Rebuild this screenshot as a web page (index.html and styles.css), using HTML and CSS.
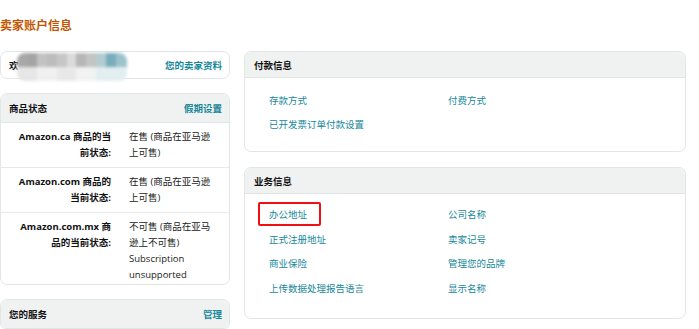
FILE: index.html
```html
<!DOCTYPE html>
<html lang="zh-CN">
<head>
<meta charset="UTF-8">
<meta name="viewport" content="width=device-width, initial-scale=1.0">
<title>卖家账户信息</title>
<link rel="stylesheet" href="styles.css">
</head>
<body>

<h1 class="page-title">卖家账户信息</h1>

<div class="layout">
  <div class="column">
    <div class="card welcome">
      <span class="welcome-text">欢<span class="masked"></span></span>
      <a href="#" class="head-link">您的卖家资料</a>
    </div>

    <div class="card">
      <div class="card-header">
        <span>商品状态</span>
        <a href="#" class="head-link">假期设置</a>
      </div>
      <div class="status-row">
        <div class="status-label">Amazon.ca 商品的当前状态:</div>
        <div class="status-value">在售 (商品在亚马逊上可售)</div>
      </div>
      <div class="status-row">
        <div class="status-label">Amazon.com 商品的当前状态:</div>
        <div class="status-value">在售 (商品在亚马逊上可售)</div>
      </div>
      <div class="status-row">
        <div class="status-label">Amazon.com.mx 商品的当前状态:</div>
        <div class="status-value">不可售 (商品在亚马逊上不可售) Subscription unsupported</div>
      </div>
    </div>

    <div class="card">
      <div class="card-header">
        <span>您的服务</span>
        <a href="#" class="head-link">管理</a>
      </div>
    </div>
  </div>

  <div class="column wide">
    <div class="card">
      <div class="card-header small">付款信息</div>
      <div class="link-grid pay">
        <a href="#">存款方式</a>
        <a href="#">付费方式</a>
        <a href="#">已开发票订单付款设置</a>
      </div>
    </div>

    <div class="card">
      <div class="card-header small">业务信息</div>
      <div class="link-grid biz">
        <a href="#"><span class="marked">办公地址</span></a>
        <a href="#">公司名称</a>
        <a href="#">正式注册地址</a>
        <a href="#">卖家记号</a>
        <a href="#">商业保险</a>
        <a href="#">管理您的品牌</a>
        <a href="#">上传数据处理报告语言</a>
        <a href="#">显示名称</a>
      </div>
    </div>
  </div>
</div>

</body>
</html>
```

FILE: styles.css
```css
/* Reset */
* {
  box-sizing: border-box;
  margin: 0;
  padding: 0;
}

body {
  font-family: 'Open Sans', 'Noto Sans CJK SC', sans-serif;
  font-size: 9.5px;
  color: #111111;
  background: #ffffff;
  overflow: hidden;
}

a {
  color: #17879a;
  text-decoration: none;
}

/* Title */
.page-title {
  margin-top: 17px;
  font-size: 12px;
  line-height: 18px;
  font-weight: bold;
  color: #c45500;
}

/* Two columns */
.layout {
  display: grid;
  grid-template-columns: 230px 442px;
  column-gap: 14px;
  margin-top: 16px;
}

.column {
  display: flex;
  flex-direction: column;
  gap: 14px;
}

.column.wide {
  gap: 15px;
}

/* Cards */
.card {
  background: #ffffff;
  border: 1px solid #e3e6e6;
  border-radius: 7px;
  overflow: hidden;
}

.card-header {
  display: flex;
  justify-content: space-between;
  align-items: center;
  height: 29px;
  padding: 0 7px 0 8px;
  background: #f0f2f2;
  border-bottom: 1px solid #e3e6e6;
  font-weight: bold;
}

.card-header.small {
  height: 26px;
  padding-left: 9px;
}

.head-link {
  font-weight: bold;
}

/* Welcome */
.welcome {
  display: flex;
  justify-content: space-between;
  align-items: center;
  height: 28px;
  padding: 0 7px 0 8px;
  overflow: visible;
}

.welcome-text {
  display: flex;
  align-items: center;
  font-weight: bold;
}

.masked {
  display: inline-block;
  width: 110px;
  height: 28px;
  margin: 3px 0 0 -2px;
  background:
    linear-gradient(90deg,
      #a8a8a8 0 9%, #a4a4a4 9% 18%, #c2c2c2 18% 27%, #bcbcbc 27% 36%,
      #c6c6c6 36% 45%, #dcdada 45% 54%, #b6b6b6 54% 63%, #c4c4c4 63% 72%,
      #b3ccd2 72% 81%, #79adbb 81% 90%, #9cc3cc 90% 100%) top / 100% 50% no-repeat,
    linear-gradient(90deg,
      #e6e6e6 0 18%, #f0f0f0 18% 36%, #e8e8e8 36% 54%, #f2f2f2 54% 72%,
      #e2eef0 72% 100%) bottom / 100% 50% no-repeat;
  filter: blur(1.6px);
  border-radius: 8px;
}

/* Product status rows */
.status-row {
  display: grid;
  grid-template-columns: 95px 88px;
  column-gap: 18px;
  padding: 6px 0 6px 15px;
  line-height: 16px;
  border-bottom: 1px solid #e7e9e9;
}

.status-row:last-child {
  border-bottom: none;
  padding-bottom: 1px;
}

.status-label {
  text-align: right;
  font-weight: bold;
}

.status-value {
  color: #222222;
}

/* Link grids */
.link-grid {
  display: grid;
  grid-template-columns: 179px 1fr;
  padding-left: 24px;
  line-height: 24px;
}

.link-grid.pay {
  padding-top: 11px;
  padding-bottom: 14px;
}

.link-grid.biz {
  padding-top: 9px;
  padding-bottom: 16px;
  line-height: 24.7px;
}

/* Red annotation box */
.marked {
  position: relative;
}

.marked::after {
  content: '';
  position: absolute;
  left: -11px;
  right: -14px;
  top: -6px;
  bottom: -5px;
  border: 2px solid #f01010;
  border-radius: 2px;
}
```
